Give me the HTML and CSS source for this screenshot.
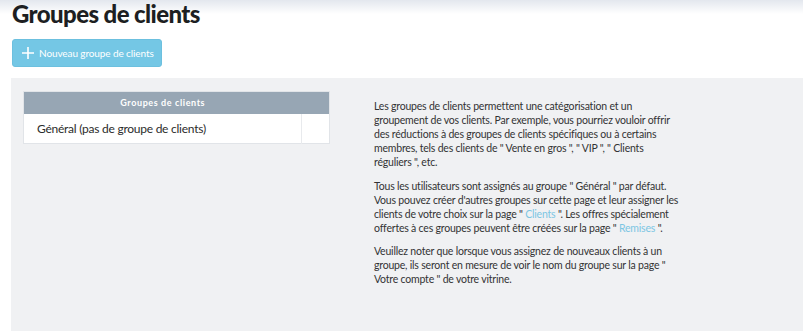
FILE: index.html
```html
<!DOCTYPE html>
<html lang="fr">
<head>
  <meta charset="UTF-8" />
  <title>Groupes de clients</title>
  <link rel="stylesheet" href="styles.css">
</head>
<body>
  <div class="topbar"></div>

  <h1 class="title">Groupes de clients</h1>

  <div class="actions">
    <a href="#" class="btn-add">
      <svg class="plus" width="12" height="12" viewBox="0 0 12 12"><path d="M6 0v12M0 6h12" stroke="#fff" stroke-width="1.6"/></svg>
      Nouveau groupe de clients
    </a>
  </div>

  <div class="panel">
    <div class="left">
      <table class="groups">
        <thead>
          <tr><th>Groupes de clients</th><th class="empty"></th></tr>
        </thead>
        <tbody>
          <tr><td>Général (pas de groupe de clients)</td><td class="empty"></td></tr>
        </tbody>
      </table>
    </div>

    <div class="help">
      <p>Les groupes de clients permettent une catégorisation et un groupement de vos clients. Par exemple, vous pourriez vouloir offrir des réductions à des groupes de clients spécifiques ou à certains membres, tels des clients de " Vente en gros ", " VIP ", " Clients réguliers ", etc.</p>
      <p>Tous les utilisateurs sont assignés au groupe " Général " par défaut. Vous pouvez créer d'autres groupes sur cette page et leur assigner les clients de votre choix sur la page " <a href="#">Clients</a> ". Les offres spécialement offertes à ces groupes peuvent être créées sur la page " <a href="#">Remises</a> ".</p>
      <p>Veuillez noter que lorsque vous assignez de nouveaux clients à un groupe, ils seront en mesure de voir le nom du groupe sur la page " Votre compte " de votre vitrine.</p>
    </div>
  </div>
</body>
</html>
```

FILE: styles.css
```css
* {
  box-sizing: border-box;
  margin: 0;
  padding: 0;
}

body {
  font-family: Lato, "Open Sans", sans-serif;
  background-color: #fff;
  color: #333;
  height: 331px;
  overflow: hidden;
  display: flex;
  flex-direction: column;
}

.topbar {
  height: 14px;
  margin-bottom: -14px;
  background: linear-gradient(#e3e7ee, rgba(255,255,255,0));
}

.title {
  font-size: 24px;
  font-weight: 900;
  color: #1d1f22;
  line-height: 27px;
  letter-spacing: -0.6px;
  padding: 0 0 0 12px;
}

.actions {
  padding: 12px 0 11px 12px;
}

.btn-add {
  display: inline-flex;
  align-items: center;
  gap: 5px;
  width: 150px;
  height: 28px;
  padding: 0 0 0 9px;
  background-color: #74c7e5;
  border: 1px solid #6cc0df;
  border-radius: 3px;
  color: #fff;
  font-size: 10px;
  letter-spacing: -0.1px;
  white-space: nowrap;
  text-decoration: none;
}

.plus {
  flex-shrink: 0;
}

.panel {
  flex-grow: 1;
  margin-left: 11px;
  background-color: #f0f1f3;
  display: flex;
  padding: 13px 0 0 12px;
}

.left {
  width: 307px;
}

.groups {
  width: 100%;
  border-collapse: collapse;
  background-color: #fff;
  border: 1px solid #e1e4e8;
}

.groups th {
  background-color: #97a6b4;
  color: #fff;
  font-size: 9px;
  font-weight: 700;
  letter-spacing: 0.6px;
  height: 22px;
  text-align: center;
}

.groups td {
  height: 30px;
  font-size: 12px;
  letter-spacing: -0.25px;
  color: #2b2b2b;
  padding-left: 13px;
}

.groups .empty {
  width: 28px;
  padding: 0;
}

.groups td.empty {
  border-left: 1px solid #e8eaed;
}

.help {
  width: 306px;
  margin-left: 44px;
  padding-top: 8px;
  font-size: 10.5px;
  letter-spacing: -0.2px;
  line-height: 14px;
  color: #333;
}

.help p {
  margin-bottom: 9.5px;
}

.help a {
  color: #7cc6e3;
  text-decoration: none;
}
```
